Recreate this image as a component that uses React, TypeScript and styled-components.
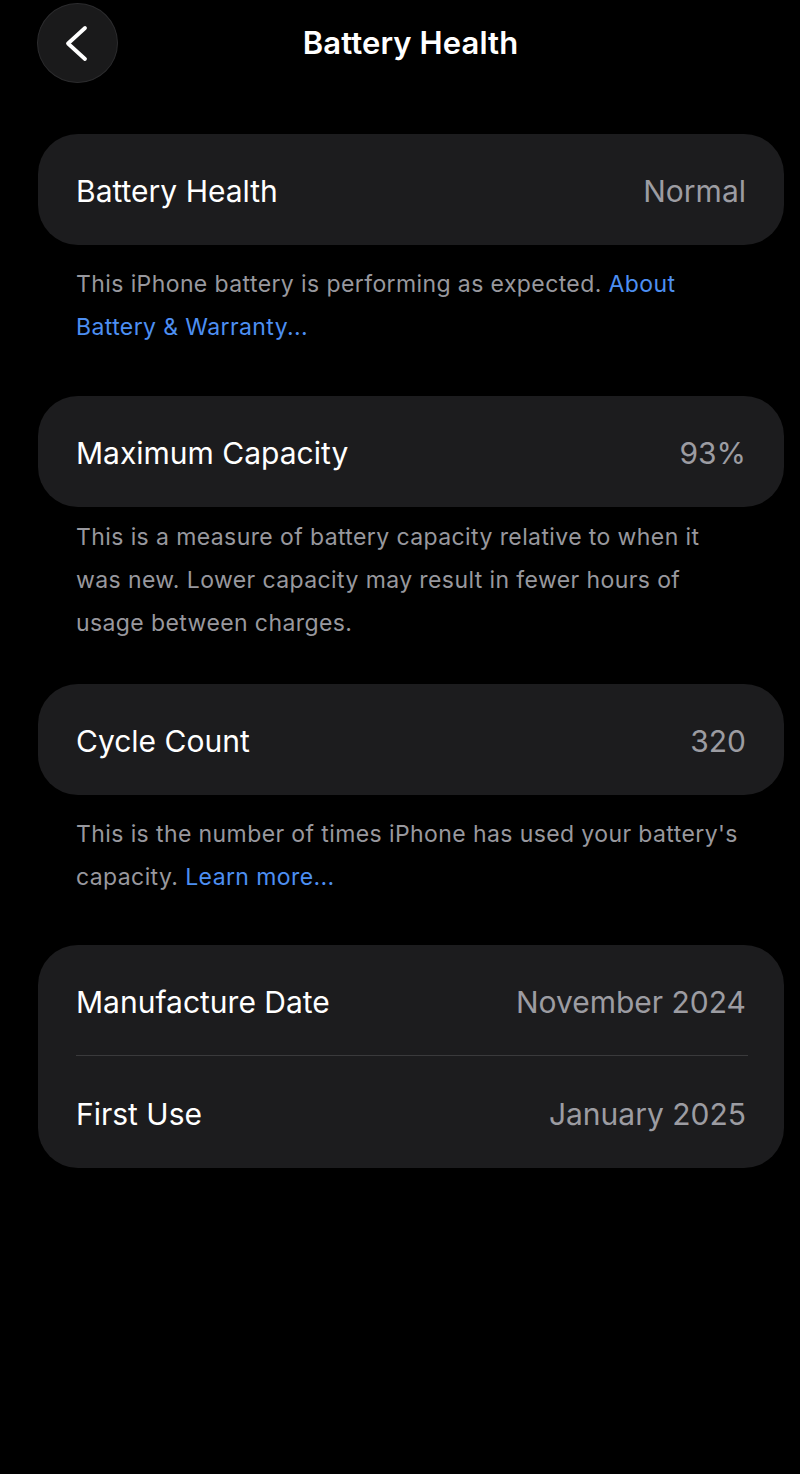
import * as React from 'react'
import styled, {createGlobalStyle} from 'styled-components'

const GlobalStyle = createGlobalStyle`
  html, body {
    margin: 0;
    padding: 0;
    background: #000;
  }
  body {
    font-family: Inter, "Noto Sans", "Liberation Sans", sans-serif;
    -webkit-font-smoothing: antialiased;
  }
`

const Page = styled.div`
  width: 800px;
  min-height: 1474px;
  background: #000;
  display: flex;
  flex-direction: column;
`

const Header = styled.div`
  display: grid;
  grid-template-columns: 81px 1fr 81px;
  align-items: center;
  padding: 2px 38px 0 37px;
  height: 82px;
`

const BackButton = styled.button`
  width: 81px;
  height: 80px;
  border-radius: 50%;
  background: #1a1a1b;
  border: 1px solid #2c2c2e;
  padding: 0;
  display: flex;
  align-items: center;
  justify-content: center;
  cursor: pointer;
`

const Title = styled.h1`
  margin: 0 0 2px;
  padding-left: 22px;
  text-align: center;
  color: #fff;
  font-size: 31px;
  font-weight: 600;
  letter-spacing: 0.1px;
`

const Content = styled.div`
  display: flex;
  flex-direction: column;
  padding: 50px 16px 0 38px;
`

const Card = styled.div<{$mt?: number}>`
  background: #1c1c1e;
  border-radius: 40px;
  margin-top: ${p => p.$mt ?? 0}px;
  display: flex;
  flex-direction: column;
`

const Row = styled.div<{$h?: number}>`
  box-sizing: border-box;
  height: ${p => p.$h ?? 111}px;
  padding: 3px 38px 0;
  display: flex;
  align-items: center;
  justify-content: space-between;
  font-size: 30px;
  letter-spacing: 0;
`

const Label = styled.span`
  color: #fff;
`

const Value = styled.span`
  color: #9c9ca2;
`

const Divider = styled.div`
  height: 1px;
  margin: 0 36px 0 38px;
  background: #3a3a3c;
`

const Footer = styled.p<{$mt: number}>`
  margin: ${p => p.$mt}px 0 0;
  padding: 0 38px;
  color: #98989e;
  font-size: 23px;
  line-height: 43px;
  letter-spacing: 0.4px;
`

const Link = styled.a`
  color: #4d8ff2;
  text-decoration: none;
`

const Chevron = () => (
  <svg width="40" height="40" viewBox="0 0 40 40" fill="none">
    <polyline
      points="27,5 10,20.5 27,36"
      stroke="#fff"
      strokeWidth="3.8"
      strokeLinecap="round"
      strokeLinejoin="round"
    />
  </svg>
)

export default function App() {
  return (
    <Page>
      <GlobalStyle />
      <Header>
        <BackButton aria-label="Back">
          <Chevron />
        </BackButton>
        <Title>Battery Health</Title>
        <span />
      </Header>
      <Content>
        <Card>
          <Row>
            <Label>Battery Health</Label>
            <Value>Normal</Value>
          </Row>
        </Card>
        <Footer $mt={18}>
          This iPhone battery is performing as expected. <Link href="#">About Battery &amp; Warranty...</Link>
        </Footer>

        <Card $mt={47}>
          <Row>
            <Label>Maximum Capacity</Label>
            <Value>93%</Value>
          </Row>
        </Card>
        <Footer $mt={9}>
          This is a measure of battery capacity relative to when it was new. Lower capacity may result in fewer hours of usage between charges.
        </Footer>

        <Card $mt={39}>
          <Row>
            <Label>Cycle Count</Label>
            <Value>320</Value>
          </Row>
        </Card>
        <Footer $mt={18}>
          This is the number of times iPhone has used your battery's capacity. <Link href="#">Learn more...</Link>
        </Footer>

        <Card $mt={46}>
          <Row $h={110}>
            <Label>Manufacture Date</Label>
            <Value>November 2024</Value>
          </Row>
          <Divider />
          <Row $h={112}>
            <Label>First Use</Label>
            <Value>January 2025</Value>
          </Row>
        </Card>
      </Content>
    </Page>
  )
}
